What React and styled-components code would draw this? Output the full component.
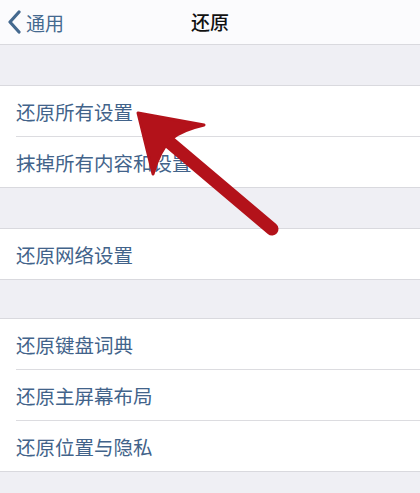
import React from "react";
import styled, { createGlobalStyle } from "styled-components";

const GlobalStyle = createGlobalStyle`
  html, body {
    margin: 0;
    padding: 0;
    background: #efeff4;
  }
  body {
    font-family: "Noto Sans CJK SC", "Noto Sans", sans-serif;
  }
`;

const Page = styled.div`
  position: relative;
  width: 420px;
  height: 493px;
  overflow: hidden;
  background: #efeff4;
`;

const NavBar = styled.div`
  height: 44px;
  background: #fbfbfd;
  border-bottom: 1px solid #d9d9de;
  display: grid;
  grid-template-columns: 1fr auto 1fr;
  align-items: center;
`;

const Back = styled.div`
  display: flex;
  align-items: center;
  gap: 5px;
  padding-left: 7px;
  color: #44698f;
  font-size: 19px;
`;

const Title = styled.div`
  font-size: 19px;
  font-weight: 500;
  color: #111;
  margin-top: -2px;
`;

const Gap = styled.div`
  height: ${(p) => p.h}px;
`;

const Group = styled.div`
  background: #fff;
  border-top: 1px solid #d9d9de;
  border-bottom: 1px solid #d9d9de;
`;

const Row = styled.div`
  height: 50px;
  margin-left: 16px;
  display: flex;
  align-items: center;
  font-size: 19.5px;
  color: #42638a;
  border-top: ${(p) => (p.first ? "none" : "1px solid #dcdce0")};
`;

const Arrow = styled.svg`
  position: absolute;
  left: 0;
  top: 0;
  pointer-events: none;
`;

const groups = [
  { gap: 40, rows: ["还原所有设置", "抹掉所有内容和设置"] },
  { gap: 40, rows: ["还原网络设置"] },
  { gap: 38, rows: ["还原键盘词典", "还原主屏幕布局", "还原位置与隐私"] },
];

export default function App() {
  return (
    <Page>
      <GlobalStyle />
      <NavBar>
        <Back>
          <svg width="14" height="24" viewBox="0 0 14 24">
            <path
              d="M12 2 L3 12 L12 22"
              fill="none"
              stroke="#44698f"
              strokeWidth="3.2"
              strokeLinecap="round"
              strokeLinejoin="round"
            />
          </svg>
          <span>通用</span>
        </Back>
        <Title>还原</Title>
        <div />
      </NavBar>
      {groups.map((g, i) => (
        <React.Fragment key={i}>
          <Gap h={g.gap} />
          <Group>
            {g.rows.map((r, j) => (
              <Row key={r} first={j === 0}>
                {r}
              </Row>
            ))}
          </Group>
        </React.Fragment>
      ))}
      <Arrow width="420" height="493" viewBox="0 0 420 493">
        <line
          x1="162"
          y1="136"
          x2="272"
          y2="229"
          stroke="#b3121a"
          strokeWidth="13"
          strokeLinecap="round"
        />
        <path
          d="M138 113 L204 125 Q182 130 171 139 Q160 150 153 174 Z"
          fill="#b3121a"
          stroke="#b3121a"
          strokeWidth="3"
          strokeLinejoin="round"
        />
      </Arrow>
    </Page>
  );
}
